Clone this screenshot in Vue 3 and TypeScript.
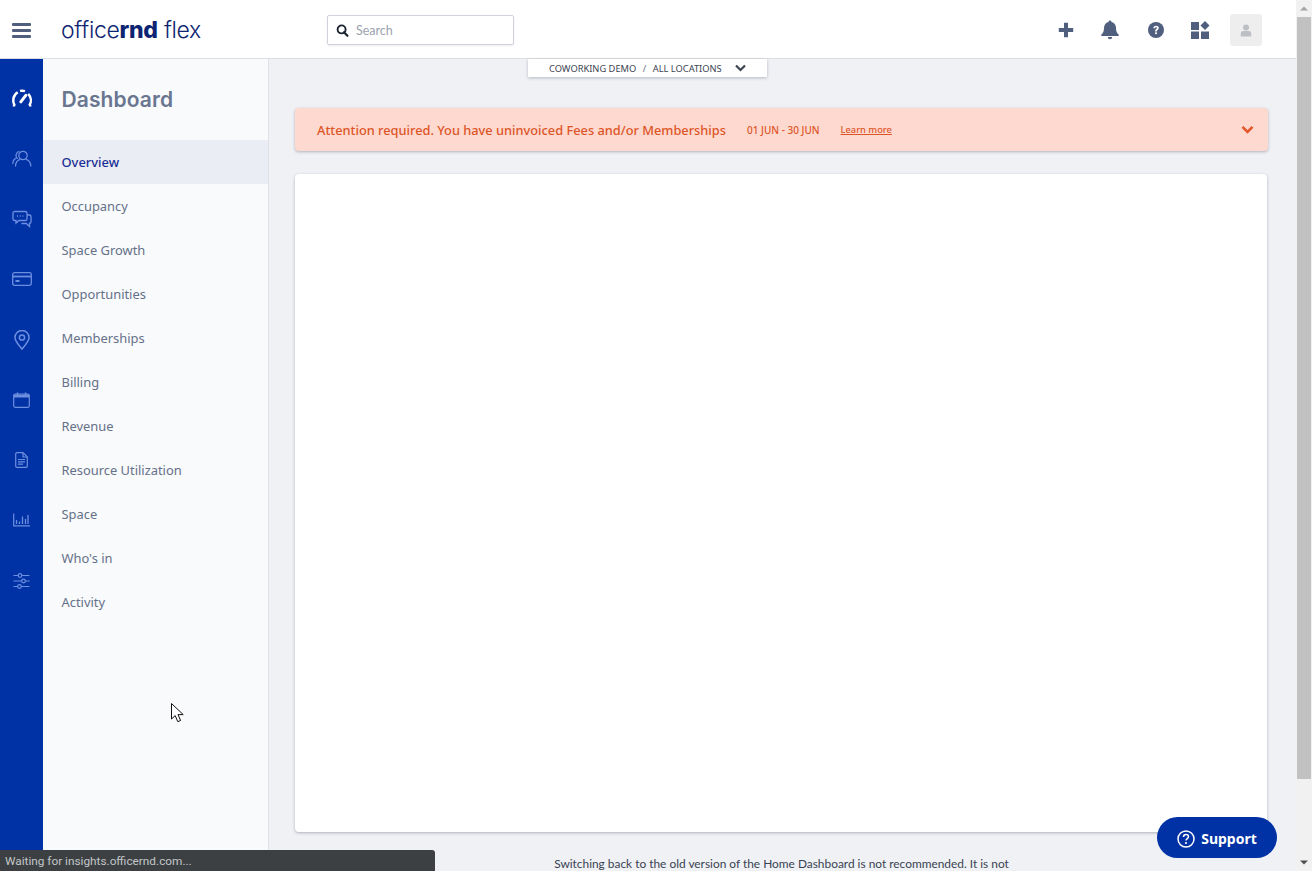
<script setup lang="ts">
const navItems: string[] = ['Overview','Occupancy','Space Growth','Opportunities','Memberships','Billing','Revenue','Resource Utilization','Space',"Who's in",'Activity']
</script>

<template>
  <div class="root">
    <div class="page">
      <header class="topbar">
        <button class="burger" aria-label="Menu"><span></span><span></span><span></span></button>
        <div class="logo">office<b>rnd</b> flex</div>
        <div class="search">
          <svg width="13" height="13" viewBox="0 0 13 13"><circle cx="5.6" cy="5.4" r="4" fill="none" stroke="#1c2431" stroke-width="1.9"/><path d="M8 8.2l3.4 3.6" stroke="#1c2431" stroke-width="2.2" stroke-linecap="round"/></svg>
          <span>Search</span>
        </div>
        <div class="actions">
          <svg class="act" width="16" height="16" viewBox="0 0 16 16"><path d="M8 .8v14.400M.8 8h14.400" stroke="#515f7e" stroke-width="4"/></svg>
          <svg class="act" width="18" height="20" viewBox="0 0 18 20"><path d="M9 .5c.9 0 1.500.6 1.500 1.500C13.500 2.700 15 5 15 8c0 3.600 1 5 2.700 6.600v1.500H.3v-1.500C2 13 3 11.600 3 8c0-3 1.500-5.300 4.500-6C7.500 1.100 8.100.5 9 .5z" fill="#515f7e"/><path d="M6.800 17h4.400a2.200 2.200 0 0 1-4.400 0z" fill="#515f7e"/></svg>
          <svg class="act" width="16" height="16" viewBox="0 0 16 16"><circle cx="8" cy="8" r="8" fill="#515f7e"/><path d="M5.300 6.200C5.400 4.600 6.500 3.700 8 3.700s2.800.9 2.800 2.300c0 1.900-2 1.900-2 3.400H7.100c0-2.400 1.900-2.300 1.900-3.300 0-.5-.4-.9-1-.9s-1 .4-1.100 1z" fill="#fff"/><rect x="7.100" y="10.300" width="1.800" height="1.800" fill="#fff"/></svg>
          <svg class="act" width="19" height="18" viewBox="0 0 19 18"><rect x="0" y="1" width="8" height="8" fill="#515f7e"/><rect x="0" y="10.500" width="8" height="7.500" fill="#515f7e"/><rect x="10" y="10.500" width="8" height="7.500" fill="#515f7e"/><path d="M14 0l4.500 4.500L14 9 9.500 4.500z" fill="#515f7e"/></svg>
          <div class="avatar">
            <svg width="12" height="13" viewBox="0 0 12 13"><circle cx="6" cy="3.400" r="3" fill="#bcbfc4"/><path d="M.8 12.600V9.500C.8 7.800 2 7 3.400 7h5.200c1.400 0 2.600.8 2.600 2.500v3.100z" fill="#bcbfc4"/></svg>
          </div>
        </div>
      </header>

      <div class="body">
        <aside class="rail">
          <svg class="rail-icon" width="22" height="18" viewBox="0 0 22 18" fill="none" stroke="#fff" stroke-width="2.500"><path d="M3.700 16.600A9.600 9.600 0 0 1 6.700 3.300"/><path d="M9 1.900A9.600 9.600 0 0 1 14 2.100"/><path d="M17.200 4.800A9.600 9.600 0 0 1 18.300 16.600"/><path d="M9.800 12.800l5-6.500" stroke-width="3" stroke-linecap="round"/><path d="M1.800 16.600h2.400M18 16.600h2.400" stroke-width="1.800"/></svg>
          <svg class="rail-icon down1" width="20" height="18" viewBox="0 0 20 18" fill="none" stroke="#6d8fe0" stroke-width="1.200"><circle cx="11" cy="5.500" r="4.200"/><path d="M3.500 16.500c0-4 2.500-6.600 4.800-7.200M18.800 16.500c0-4-2.500-6.600-4.800-7.200"/><path d="M5.800 8.800A4 4 0 0 1 7.500 1.500M.8 14c0-3 1.400-4.800 3-5.600"/></svg>
          <svg class="rail-icon" width="20" height="17" viewBox="0 0 20 17" fill="none" stroke="#6d8fe0" stroke-width="1.300"><path d="M2.500 1h11c.9 0 1.500.6 1.500 1.500v6c0 .9-.6 1.500-1.500 1.500H7l-3 2.500V10H2.500C1.600 10 1 9.400 1 8.500v-6C1 1.600 1.600 1 2.500 1z"/><path d="M15 4.500h2.500c.9 0 1.500.6 1.500 1.500v5.500c0 .9-.6 1.500-1.500 1.500V16l-3.200-3H9.500"/><path d="M5 5.500h1M7.700 5.500h1M10.400 5.500h1" stroke-width="1.400"/></svg>
          <svg class="rail-icon" width="20" height="14" viewBox="0 0 20 14" fill="none" stroke="#6d8fe0" stroke-width="1.300"><rect x=".7" y=".7" width="18.600" height="12.600" rx="1.800"/><path d="M1 4.500h18" stroke-width="1.800"/><path d="M3.500 9h4" stroke-width="2"/></svg>
          <svg class="rail-icon" width="16" height="20" viewBox="0 0 16 20" fill="none" stroke="#6d8fe0" stroke-width="1.500"><path d="M8 19C5.500 15.800 1 11.500 1 7.500a7 7 0 0 1 14 0C15 11.500 10.500 15.800 8 19z"/><circle cx="8" cy="7.500" r="2.600"/></svg>
          <svg class="rail-icon" width="17" height="16" viewBox="0 0 17 16" fill="none" stroke="#6d8fe0" stroke-width="1.200"><rect x=".7" y="2" width="15.600" height="13.300" rx="1.500"/><path d="M1 4h15" stroke-width="3"/><path d="M4.500 .5v2.500M12.500 .5v2.500" stroke-width="1.400"/></svg>
          <svg class="rail-icon" width="13" height="16" viewBox="0 0 13 16" fill="none" stroke="#6d8fe0" stroke-width="1.200"><path d="M2 .7h6l4.300 4.300v9c0 .7-.5 1.300-1.300 1.300H2c-.8 0-1.300-.6-1.300-1.300V2C.7 1.300 1.200.7 2 .7z"/><path d="M8 .9V5h4.200M3 7.500h7M3 9.800h7M3 12.100h5"/></svg>
          <svg class="rail-icon shift-up" width="17" height="13" viewBox="0 0 17 13" fill="none" stroke="#6d8fe0" stroke-width="1.200"><path d="M.7 0v12.300H17"/><path d="M3.500 6.500v4M6.500 8v2.500M9.500 3v7.500M12.500 5.500v5M15 1.500v9" stroke-width="1.300"/></svg>
          <svg class="rail-icon" width="17" height="17" viewBox="0 0 17 17" fill="none" stroke="#6d8fe0" stroke-width="1.200"><path d="M.5 3h16M.5 8.500h16M.5 14h16"/><circle cx="7" cy="3" r="1.800" fill="#0031a5"/><circle cx="10.500" cy="8.500" r="1.800" fill="#0031a5"/><circle cx="6.500" cy="14" r="1.800" fill="#0031a5"/></svg>
        </aside>

        <nav class="sidenav">
          <h1>Dashboard</h1>
          <a v-for="(item, i) in navItems" :key="item" class="nav-item" :class="{ current: i === 0 }">{{ item }}</a>
        </nav>

        <main class="main">
          <div class="banner">
            <strong>Attention required. You have uninvoiced Fees and/or Memberships</strong>
            <span class="dates">01 JUN - 30 JUN</span>
            <a class="learn">Learn more</a>
            <svg class="banner-chev" width="13" height="9" viewBox="0 0 13 9" fill="none"><path d="M1.500 1.800l5 5 5-5" stroke="#e4572a" stroke-width="2.600"/></svg>
          </div>
          <section class="card"></section>
          <p class="note">Switching back to the old version of the Home Dashboard is not recommended. It is not</p>
        </main>
      </div>

      <div class="loc-tab">
        <span>COWORKING DEMO</span><i>/</i><span>ALL LOCATIONS</span>
        <svg width="11" height="8" viewBox="0 0 11 8" fill="none"><path d="M1 1.500l4.500 4.500L10 1.500" stroke="#3c4452" stroke-width="2.200"/></svg>
      </div>
    </div>

    <div class="scrollbar">
      <svg width="16" height="17" viewBox="0 0 16 17"><path d="M4 10.500L8 6.500l4 4z" fill="#a3a3a3"/></svg>
      <div class="thumb"></div>
      <svg class="down" width="16" height="17" viewBox="0 0 16 17"><path d="M4 6.500l4 4 4-4z" fill="#505050"/></svg>
    </div>

    <button class="support">
      <svg width="18" height="18" viewBox="0 0 18 18" fill="none"><circle cx="9" cy="9" r="8" stroke="#fff" stroke-width="1.500"/><path d="M6.500 7c0-1.500 1.100-2.400 2.500-2.400s2.500.9 2.500 2.200c0 1.800-2.500 1.800-2.500 3.600" stroke="#fff" stroke-width="1.500"/><circle cx="9" cy="13" r="1.100" fill="#fff"/></svg>
      Support
    </button>

    <div class="status">Waiting for insights.officernd.com...</div>

    <svg class="cursor" width="13" height="20" viewBox="0 0 13 20"><path d="M.5.5v15.500l3.700-3.400 2.600 6.100 2.800-1.200-2.600-5.900h5.200z" fill="#fff" stroke="#111" stroke-width="1"/></svg>
  </div>
</template>

<style>
html, body { margin: 0; background: #eff1f5; }
</style>

<style scoped>
.root {
  position: relative;
  display: flex;
  width: 1312px;
  height: 871px;
  overflow: hidden;
  font-family: "Noto Sans", "Open Sans", sans-serif;
}
.page { position: relative; flex: 1; min-width: 0; display: flex; flex-direction: column; background: #eff1f5; }

.topbar {
  flex: none;
  height: 59px;
  box-sizing: border-box;
  padding-top: 2px;
  border-bottom: 1px solid #dcdee3;
  background: #fff;
  display: flex;
  align-items: center;
}
.burger {
  width: 19px; height: 15px; margin: 0 0 0 12px; padding: 0; border: 0; background: none;
  display: flex; flex-direction: column; justify-content: space-between;
}
.burger span { display: block; height: 3px; border-radius: 1px; background: #515f7e; }
.logo {
  margin-left: 30px; width: 266px;
  font-family: Inter, sans-serif; font-size: 23px; font-weight: 300; letter-spacing: -.3px;
  color: #0d2472; white-space: nowrap;
}
.logo b { font-weight: 800; }
.search {
  height: 28px; border: 1px solid #d0d3dc; border-radius: 2px; box-shadow: 0 1px 2px rgba(80,90,120,.12);
  display: flex; align-items: center; gap: 7px; padding-left: 8px; box-sizing: content-box; width: 177px;
  font-family: Lato, sans-serif; font-size: 12.500px; color: #9ca3ae;
}
.actions { margin-left: auto; margin-right: 34px; display: flex; align-items: center; }
.act { display: block; }
.actions .act:nth-child(1) { margin-right: 27px; }
.actions .act:nth-child(2) { margin-right: 29px; }
.actions .act:nth-child(3) { margin-right: 27px; }
.actions .act:nth-child(4) { margin-right: 20px; }
.avatar { width: 32px; height: 32px; border-radius: 3px; background: #eeeeef; display: flex; align-items: center; justify-content: center; }

.body { flex: 1; min-height: 0; display: flex; }
.rail {
  flex: none; width: 43px; background: #0031a5; padding-top: 29px; box-sizing: border-box;
  display: flex; flex-direction: column; align-items: center;
}
.rail-icon { display: block; height: 20px; margin-bottom: 40.400px; }
.rail-icon.down1 { margin-top: 1px; margin-bottom: 39.400px; }
.rail-icon.shift-up { margin-top: -1px; margin-bottom: 41.400px; }

.sidenav { flex: none; width: 225px; border-right: 1px solid #dfe1e7; background: #f9fafc; }
.sidenav h1 {
  margin: 0; height: 81px; padding: 28px 0 0 18.500px; box-sizing: border-box;
  font-family: Inter, sans-serif; font-size: 21px; line-height: 26px; font-weight: 600; letter-spacing: .1px; color: #6a7690;
}
.nav-item { display: flex; align-items: center; height: 44px; padding-left: 18.500px; font-size: 12.900px; color: #657189; }
.nav-item.current { background: #ebedf4; color: #1a2f96; font-weight: 500; }

.main { flex: 1; min-width: 0; padding: 49px 28px 0 26px; }
.banner {
  height: 43px; border-radius: 4px; background: #fdd9d0; box-shadow: 0 1px 3px rgba(60,60,80,.35);
  display: flex; align-items: center; padding: 0 14px 0 22px; color: #de5526; white-space: nowrap;
}
.banner strong { font-size: 12.800px; font-weight: 500; }
.dates { margin-left: 21px; font-size: 10px; font-weight: 500; }
.learn { margin-left: 21px; font-size: 9.300px; text-decoration: underline; font-weight: 500; }
.banner-chev { margin-left: auto; }
.card { height: 658px; margin: 23px 1px 0 0; border-radius: 4px; background: #fff; box-shadow: 0 1px 3px rgba(60,60,80,.35); }
.note { margin: 23px 0 0; text-align: center; font-family: Lato, sans-serif; font-size: 11.900px; line-height: 17px; color: #3a4252; white-space: nowrap; }

.loc-tab {
  position: absolute; top: 59px; left: 528px; width: 239px; height: 18px; box-sizing: border-box;
  background: #fff; box-shadow: 0 1px 3px rgba(60,60,80,.3);
  display: flex; align-items: center; padding-left: 21px;
  font-size: 9.300px; color: #3c4452;
}
.loc-tab i { margin: 0 6.500px; font-style: normal; color: #6a7280; }
.loc-tab svg { margin-left: 13px; }

.scrollbar { flex: none; width: 16px; background: #f1f1f1; display: flex; flex-direction: column; }
.scrollbar svg { display: block; flex: none; }
.thumb { margin: 0 1px; height: 762px; flex: none; background: #c1c1c1; }
.scrollbar .down { margin-top: auto; }

.support {
  position: absolute; left: 1157px; top: 817px; width: 120px; height: 41px; padding: 2px 0 0; border: 0; border-radius: 21px;
  background: #0031a5; color: #fff; font: 700 14px "Noto Sans", sans-serif;
  display: flex; align-items: center; justify-content: center; gap: 6px;
}
.status {
  position: absolute; left: 0; bottom: 0; width: 435px; height: 21px; box-sizing: border-box;
  background: #3c4043; color: #c3c6c9; border-radius: 0 3px 0 0; padding: 3px 0 0 5px;
  font: 11.800px/16px Roboto, sans-serif;
}
.cursor { position: absolute; left: 171px; top: 703px; }
</style>
